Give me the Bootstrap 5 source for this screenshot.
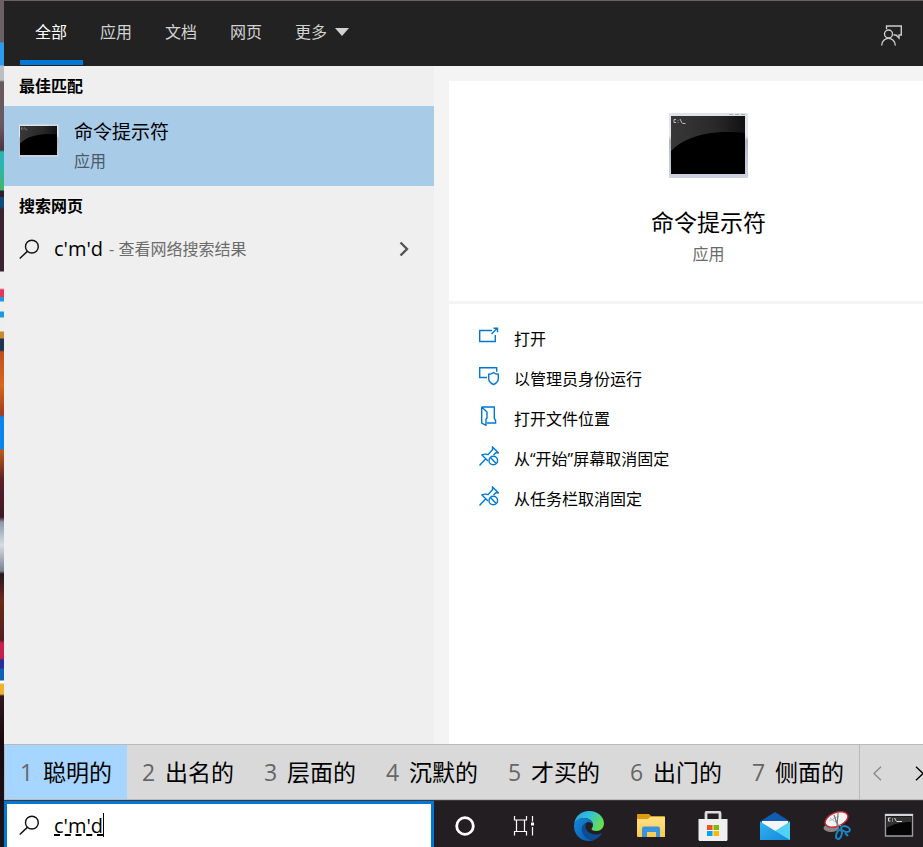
<!DOCTYPE html>
<html lang="zh-CN">
<head>
<meta charset="utf-8">
<meta name="viewport" content="width=device-width, initial-scale=1">
<title>搜索</title>
<link href="https://cdn.jsdelivr.net/npm/bootstrap@5.3.0/dist/css/bootstrap.min.css" rel="stylesheet">
<style>
  body {
    font-family: "Open Sans", "Noto Sans CJK SC", sans-serif;
    font-size: 16px;
    line-height: 24px;
    color: #000;
    background: linear-gradient(180deg, #6d6064 0 42px, #2a9df0 43px 65px, #b9c0c4 66px 80px, #6a5860 82px 125px, #4c3440 150px, #2bb5b0 152px 165px, #3fb66a 190px, #301c2c 191px 197px, #104a80 197px 207px, #3a2434 209px 271px, #eee 272px 288px, #e8355c 290px 297px, #1a9be0 297px 301px, #eee 302px 311px, #1a9be0 312px 317px, #eee 318px 331px, #c98a2c 332px 338px, #1d3550 339px 350px, #c0501e 352px, #d8681a 385px, #a03c20 415px, #0a84f0 417px 449px, #c05a18 450px, #5a2028 480px, #401824 517px, #8c98a8 522px, #d8dde4 545px, #788290 571px, #281420 574px, #6a2a18 600px, #581c20 640px, #c8204c 643px 658px, #2c2c98 660px 668px, #0d62b4 669px 680px, #fff 681px 683px, #f0b030 684px 694px, #301820 696px, #180810 744px, #1c141a 847px);
  }
  button { font: inherit; color: inherit; }
  .shell { margin: 1px 0 0 4px; height: calc(100vh - 1px); }
  .top-tabs { background: #222; height: 65px; padding-left: 16px; }
  .tab-btn { background: none; border: 0; border-bottom: 5px solid transparent; padding: 3px 16px 0 15px; margin: 0 2px 1px 0; color: #d2d2d2; }
  .tab-btn.current { color: #fff; border-bottom-color: #0078d7; }
  .feedback { margin-right: 21px; padding-bottom: 4px; }
  .plain { background: none; border: 0; padding: 0; }
  .results { flex: 0 0 430px; background: #efefef; }
  .group-title { font-size: 16px; font-weight: 700; line-height: 24px; padding: 8px 15px; }
  .best { background: #a8cbe8; height: 80px; padding: 0 15px; gap: 15px; }
  .best svg { margin-bottom: 11px; }
  .best-name { font-size: 19px; line-height: 28px; }
  .best-kind { line-height: 24px; margin: 3px 0 2px; color: #4b5a66; }
  .web-row { height: 46px; padding: 0 25px 0 15px; }
  .query { font-size: 20px; margin-left: 14px; margin-right: 6px; }
  .muted { color: #6b6b6b; }
  .detail { background: #f4f4f4; padding: 15px 0 0 15px; gap: 3px; }
  .hero { background: #fff; height: 220px; padding: 31px 0 0 45px; }
  .hero-name { font-size: 23px; line-height: 32px; margin-top: 28px; }
  .hero-kind { line-height: 24px; margin-top: 4px; }
  .actions { background: #fff; padding: 15px 30px; }
  .action { height: 40px; gap: 15px; text-align: left; }
  .action svg { margin-bottom: 6px; }
  .ime { background: #d9d9d9; border: 1px solid #bababa; border-right: 0; height: 56px; }
  .cand { flex: 0 0 122px; gap: 10px; padding: 0 0 0 15px; font-size: 23px; line-height: 32px; white-space: nowrap; }
  .cand.current { background: #a6d6ff; }
  .cand-no { width: 13px; color: #666; }
  .pager { border-left: 1px solid #bababa; gap: 8px; }
  .pager button { flex: 0 0 34px; }
  .taskbar { background: #231e22; height: 47px; border-top: 1px solid #3c383b; }
  .search-box { flex: 0 0 430px; background: #fff; border: 3px solid #0078d7; border-bottom: 0; padding-left: 12px; }
  .search-box input { border: 0; outline: 0; background: none; padding: 0; margin-left: 14px; font-size: 20px; line-height: 28px; color: #000; text-decoration: underline dashed 2px; text-underline-offset: 2px; }
  .caret-mark { left: 96px; top: 9px; width: 1px; height: 24px; background: #000; }
  .task-btn { flex: 0 0 62px; padding-top: 4px; }
</style>
<script src="https://cdn.jsdelivr.net/npm/bootstrap@5.3.0/dist/js/bootstrap.bundle.min.js"></script>
</head>
<body class="overflow-hidden">

<svg class="position-absolute" width="0" height="0" aria-hidden="true">
  <defs>
    <linearGradient id="gloss" x1="0" y1="0" x2="1" y2="0"><stop offset="0" stop-color="#383838"/><stop offset=".6" stop-color="#292929"/><stop offset="1" stop-color="#111"/></linearGradient>
    <linearGradient id="frame" x1="0" y1="0" x2="0" y2="1"><stop offset="0" stop-color="#dfe3e8"/><stop offset=".35" stop-color="#e6e8ec"/><stop offset=".42" stop-color="#b4b8c6"/><stop offset="1" stop-color="#cfd2e0"/></linearGradient>
    <linearGradient id="edgeTop" x1="0" y1="0" x2="1" y2=".4"><stop offset="0" stop-color="#249fdc"/><stop offset=".5" stop-color="#2fc1df"/><stop offset="1" stop-color="#65dc52"/></linearGradient>
    <linearGradient id="edgeLow" x1="0" y1="0" x2="1" y2="1"><stop offset="0" stop-color="#1488dc"/><stop offset="1" stop-color="#0b57a8"/></linearGradient>
    <linearGradient id="folder" x1="0" y1="0" x2="0" y2="1"><stop offset="0" stop-color="#ffe08a"/><stop offset="1" stop-color="#fbca4c"/></linearGradient>
    <linearGradient id="mailGrad" x1="0" y1="0" x2="1" y2="1"><stop offset="0" stop-color="#2fb4f2"/><stop offset="1" stop-color="#1687dc"/></linearGradient>
  </defs>
  <symbol id="terminal" viewBox="0 0 80 66">
    <rect x="0" y="1" width="79" height="65" rx="1" fill="url(#frame)"/>
    <path d="M60 2.500h4M66 2.500h4M72 2.500h4" stroke="#a9adb5"/>
    <rect x="2" y="4" width="74" height="58" fill="#000"/>
    <path d="M2 4h74v17C44 17 16 24 2 39z" fill="url(#gloss)"/>
    <path d="M7 7.500H5v3h2M9 8v.6M9 10v.6M11 7l2 4M13.500 11.500h3" stroke="#bbb" fill="none"/>
  </symbol>
  <symbol id="magnifier" viewBox="0 0 22 22">
    <circle cx="13.500" cy="8" r="6.700" fill="none" stroke="#111" stroke-width="1.500"/>
    <path d="M9 12.700L.8 20.500" stroke="#111" stroke-width="1.500"/>
  </symbol>
  <symbol id="unpin" viewBox="0 0 20 20">
    <g fill="none" stroke="#0078d7" stroke-width="1.400">
      <path d="M.5 19.500L6.500 13M2.500 8.500L9 15M3 9c2-1 4-1.300 6-.3l4.500-5V1L19.200 6.700H17l-2.500 2.400"/>
      <circle cx="14.300" cy="14.500" r="4.300"/><path d="M11.300 11.500l6 6"/>
    </g>
  </symbol>
</svg>

<div class="shell d-flex flex-column">
  <header class="top-tabs d-flex flex-shrink-0">
    <nav class="d-flex" aria-label="搜索范围">
      <button type="button" class="tab-btn current">全部</button>
      <button type="button" class="tab-btn">应用</button>
      <button type="button" class="tab-btn">文档</button>
      <button type="button" class="tab-btn">网页</button>
      <button type="button" class="tab-btn d-flex align-items-center gap-2">更多
        <svg width="14" height="8" viewBox="0 0 14 8" aria-hidden="true"><path d="M0 0h14L7 8z" fill="#d2d2d2"/></svg></button>
    </nav>
    <button type="button" class="plain feedback ms-auto" aria-label="反馈">
      <svg width="21" height="21" viewBox="0 0 21 21" fill="none" stroke="#ccc" stroke-width="1.400"><path d="M5.500 4V1h14.800v9H18v3l-3-3h-2.500"/><circle cx="7.500" cy="9" r="4"/><path d="M.7 20.500c0-9.500 13.600-9.500 13.600 0"/></svg>
    </button>
  </header>

  <main class="d-flex flex-grow-1">
    <section class="results">
      <h2 class="group-title m-0">最佳匹配</h2>
      <button type="button" class="plain best w-100 d-flex align-items-center text-start">
        <svg width="40" height="33" aria-hidden="true"><use href="#terminal"/></svg>
        <span class="d-flex flex-column">
          <span class="best-name">命令提示符</span>
          <span class="best-kind">应用</span>
        </span>
      </button>
      <h2 class="group-title m-0">搜索网页</h2>
      <button type="button" class="plain web-row w-100 d-flex align-items-center text-start">
        <svg width="21" height="21" aria-hidden="true"><use href="#magnifier"/></svg>
        <span class="query">c'm'd</span>
        <span class="muted">- 查看网络搜索结果</span>
        <svg class="ms-auto" width="10" height="16" viewBox="0 0 10 16" aria-hidden="true"><path d="M1.500 1.500L8 8l-6.500 6.500" fill="none" stroke="#555" stroke-width="2.400"/></svg>
      </button>
    </section>

    <section class="detail flex-grow-1 d-flex flex-column">
      <div class="hero d-flex flex-column align-items-center">
        <svg width="80" height="66" aria-hidden="true"><use href="#terminal"/></svg>
        <h1 class="hero-name fw-normal mb-0">命令提示符</h1>
        <div class="hero-kind muted">应用</div>
      </div>
      <div class="actions flex-grow-1 d-flex flex-column">
        <button type="button" class="plain action d-flex align-items-center">
          <svg width="20" height="20" viewBox="0 0 20 20" fill="none" stroke="#0078d7" stroke-width="1.400"><path d="M13 4.500H.7v11h15.600V9M12.500 8L18 2.500M14.500 2.200h4v4"/></svg>打开</button>
        <button type="button" class="plain action d-flex align-items-center">
          <svg width="20" height="20" viewBox="0 0 20 20" fill="none" stroke="#0078d7" stroke-width="1.400"><path d="M8 11.500H.7v-9.800h17v4M14.500 6.500c-1.500 1.300-3 1.800-4.800 1.800v4.200c0 3 2 4.800 4.800 6 2.800-1.200 4.800-3 4.800-6V8.300c-1.800 0-3.300-.5-4.800-1.800z"/></svg>以管理员身份运行</button>
        <button type="button" class="plain action d-flex align-items-center">
          <svg width="20" height="20" viewBox="0 0 20 20" fill="none" stroke="#0078d7" stroke-width="1.400"><path d="M2.700 1h12.600v11.500l1.300 2V17H8M2.700 1v16l4.300 2.300v-6l1-1.300V6L2.700 1"/></svg>打开文件位置</button>
        <button type="button" class="plain action d-flex align-items-center">
          <svg width="20" height="20" aria-hidden="true"><use href="#unpin"/></svg>从“开始”屏幕取消固定</button>
        <button type="button" class="plain action d-flex align-items-center">
          <svg width="20" height="20" aria-hidden="true"><use href="#unpin"/></svg>从任务栏取消固定</button>
      </div>
    </section>
  </main>

  <div class="ime d-flex flex-shrink-0 overflow-hidden">
    <button type="button" class="plain cand current d-flex align-items-center"><span class="cand-no">1</span>聪明的</button>
    <button type="button" class="plain cand d-flex align-items-center"><span class="cand-no">2</span>出名的</button>
    <button type="button" class="plain cand d-flex align-items-center"><span class="cand-no">3</span>层面的</button>
    <button type="button" class="plain cand d-flex align-items-center"><span class="cand-no">4</span>沉默的</button>
    <button type="button" class="plain cand d-flex align-items-center"><span class="cand-no">5</span>才买的</button>
    <button type="button" class="plain cand d-flex align-items-center"><span class="cand-no">6</span>出门的</button>
    <button type="button" class="plain cand d-flex align-items-center"><span class="cand-no">7</span>侧面的</button>
    <div class="pager d-flex">
      <button type="button" class="plain" aria-label="上一页"><svg width="9" height="15" viewBox="0 0 9 15" fill="none" stroke="#888" stroke-width="1.300"><path d="M8 .7L1 7.500l7 6.800"/></svg></button>
      <button type="button" class="plain" aria-label="下一页"><svg width="9" height="15" viewBox="0 0 9 15" fill="none" stroke="#000" stroke-width="1.300"><path d="M1 .7l7 6.800-7 6.800"/></svg></button>
    </div>
  </div>

  <footer class="taskbar d-flex flex-shrink-0 overflow-hidden">
    <div class="search-box position-relative d-flex align-items-center">
      <label for="q" class="d-flex"><svg width="21" height="21" role="img" aria-label="搜索"><use href="#magnifier"/></svg></label>
      <input id="q" type="text" class="flex-grow-1" value="c'm'd" spellcheck="false" autocomplete="off">
      <span class="caret-mark position-absolute"></span>
    </div>
    <button type="button" class="plain task-btn" aria-label="Cortana"><svg width="30" height="30" viewBox="0 0 30 30"><circle cx="15" cy="15" r="8.300" fill="none" stroke="#fff" stroke-width="2.800"/></svg></button>
    <button type="button" class="plain task-btn" aria-label="任务视图"><svg width="30" height="30" viewBox="0 0 30 30" fill="none" stroke="#fff" stroke-width="1.200"><path d="M2.500 5v4h12V5M2.500 24.500v-4h12v4M4.500 9v11.500M12.500 9v11.500M20.500 5v5.500M20.500 16v8.500"/><path d="M19 11.500h3v3h-3z" fill="#fff" stroke="none"/></svg></button>
    <button type="button" class="plain task-btn" aria-label="Microsoft Edge"><svg width="30" height="30" viewBox="0 0 30 30">
      <path d="M0 14C1 5 7 0 15 0c9 0 15 6 15 12.500 0 4.500-3.500 7.500-7.500 7.500-3 0-5-1-5-2 0-.8 1.500-1.500 1.500-4C19 10 15 7 10 7 5 7 1 10 0 14z" fill="url(#edgeTop)"/>
      <path d="M0 14C1 10 5 7 10 7c5 0 8.500 3 9 6.500-1.500-2-4-3-6-2-4 1.500-5.500 5-4.500 9C10 26 15 29 20 29c-2 .7-3.500 1-5 1C6 30-.5 23 0 14z" fill="url(#edgeLow)"/>
      <path d="M12.500 11.500c-4 2-5.500 5-4.500 9C9.500 26 15 29.500 20 29c3.500-1.500 6-3.500 7.700-6.200.3-.6-.2-.8-.7-.5-2 1-4 1.400-6 1.200-5.500-.5-9.500-4-9.500-8.500 0-1.300.4-2.500 1-3.500z" fill="#0c4c93"/>
    </svg></button>
    <button type="button" class="plain task-btn" aria-label="文件资源管理器"><svg width="30" height="30" viewBox="0 0 30 30">
      <path d="M2 3h11l2 2h13a1 1 0 0 1 1 1v19H1V4a1 1 0 0 1 1-1z" fill="#dc9b0a"/><path d="M1 8h11l2-2h15v20H2a1 1 0 0 1-1-1z" fill="url(#folder)"/>
      <path d="M6 26V17.500a2 2 0 0 1 2-2h14a2 2 0 0 1 2 2V26h-4v-5h-9v5z" fill="#3a93dc"/>
    </svg></button>
    <button type="button" class="plain task-btn" aria-label="Microsoft Store"><svg width="30" height="30" viewBox="0 0 30 30">
      <path d="M8 9V2.500A1.500 1.500 0 0 1 9.500 1h11A1.500 1.500 0 0 1 22 2.500V9" fill="none" stroke="#ddd" stroke-width="2.800"/>
      <path d="M.5 8h29v20.500a1.500 1.500 0 0 1-1.500 1.500H2A1.500 1.500 0 0 1 .5 28.500z" fill="#efefef"/>
      <path fill="#f25022" d="M9 14h5.500v5H9z"/><path fill="#7fba00" d="M15.500 14H21v5h-5.500z"/><path fill="#00a4ef" d="M9 20h5.500v5H9z"/><path fill="#ffb900" d="M15.500 20H21v5h-5.500z"/>
    </svg></button>
    <button type="button" class="plain task-btn" aria-label="邮件"><svg width="30" height="30" viewBox="0 0 30 30">
      <path d="M0 10.500L15 1l15 9.500V20H0z" fill="#0f5db0"/><path d="M2 10h26v8l-13 4L2 18z" fill="#f5f5f5"/>
      <path d="M30 10.500V29H0l15-9z" fill="#50d2f7"/><path d="M0 10.500L30 29H0z" fill="url(#mailGrad)"/>
    </svg></button>
    <button type="button" class="plain task-btn" aria-label="截图工具"><svg width="30" height="30" viewBox="0 0 30 30">
      <ellipse cx="9" cy="17" rx="7.500" ry="4" fill="#8b8588"/><ellipse cx="14.500" cy="8.500" rx="12" ry="6.800" transform="rotate(-22 14.500 8.500)" fill="#f4f4f6" stroke="#c8282c" stroke-width="1.400"/>
      <path d="M8 7l11 8M7 10l10-5" stroke="#b4b8be"/><path d="M12 4l5 14M16 2l-1 14" stroke="#777" stroke-width="1.200"/>
      <g fill="none" stroke="#1686c8" stroke-width="2"><ellipse cx="23.500" cy="18" rx="4.500" ry="2.700" transform="rotate(20 23.500 18)"/><ellipse cx="17" cy="23.500" rx="2.600" ry="4.600" transform="rotate(18 17 23.500)"/><path d="M23 22l3 3"/></g>
    </svg></button>
    <button type="button" class="plain task-btn" aria-label="命令提示符"><svg width="30" height="30" viewBox="0 0 30 30">
      <path d="M1.500 3.500h27v21.500h-27z" fill="#050505" stroke="#9c9ea2" stroke-width="1.400"/><path d="M1 4h28" stroke="#d5d7da" stroke-width="2"/>
      <path d="M2.500 5.500h25V11C17 11 9 13 2.500 17z" fill="#333"/><path d="M6.500 7h-2v3h2M8.500 7.500v1M8.500 9.500v1M10.500 7l2 3.500M13 10.500h5" stroke="#ddd" fill="none"/>
    </svg></button>
  </footer>
</div>
</body>
</html>
